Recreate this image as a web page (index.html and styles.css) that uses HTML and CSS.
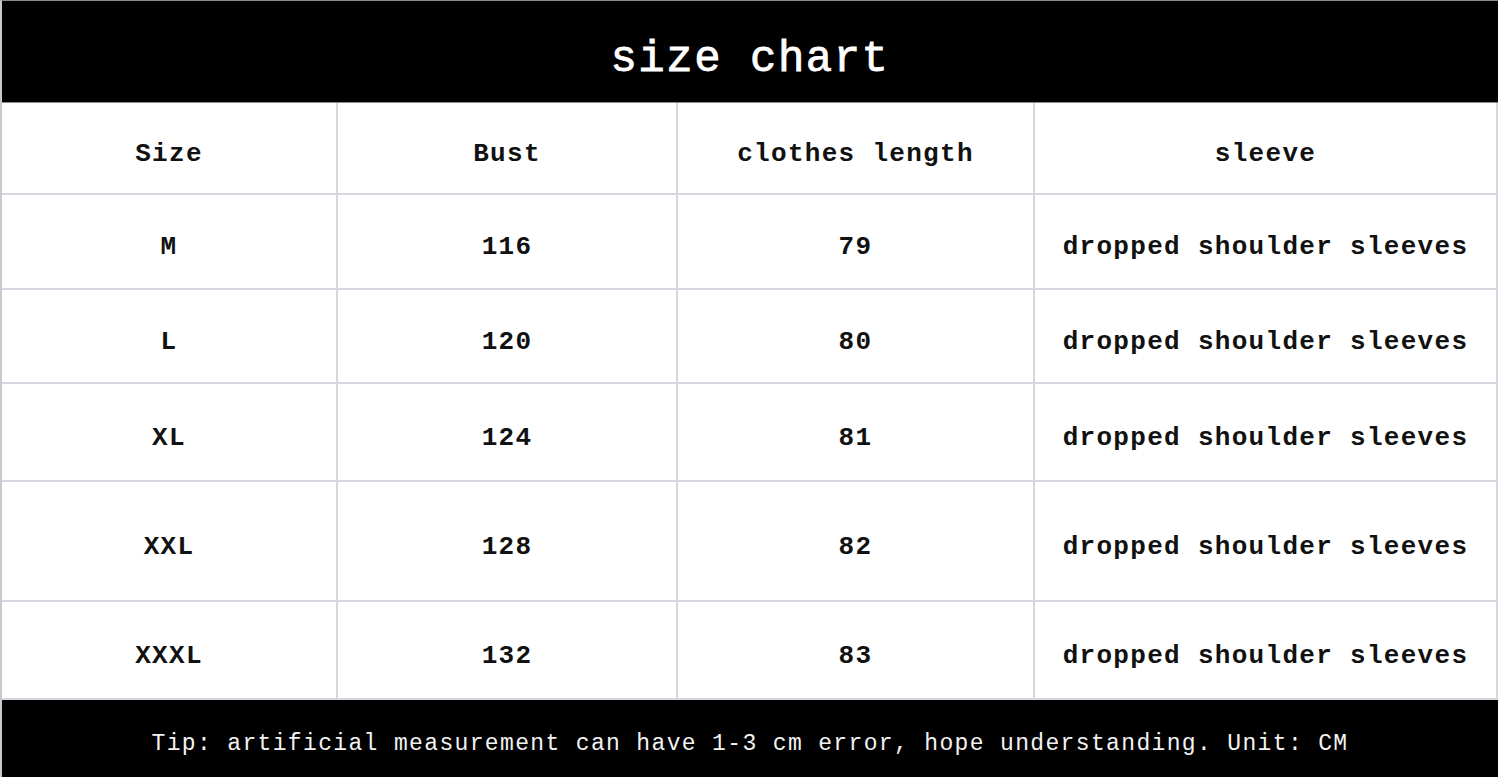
FILE: index.html
```html
<!DOCTYPE html>
<html>
<head>
<meta charset="utf-8">
<link rel="stylesheet" href="styles.css">
</head>
<body>
<div class="chart">
  <div class="title">size chart</div>
  <div class="grid">
    <div class="cell r0">Size</div>
    <div class="cell r0">Bust</div>
    <div class="cell r0">clothes length</div>
    <div class="cell r0 last">sleeve</div>

    <div class="cell">M</div>
    <div class="cell">116</div>
    <div class="cell">79</div>
    <div class="cell last">dropped shoulder sleeves</div>

    <div class="cell">L</div>
    <div class="cell">120</div>
    <div class="cell">80</div>
    <div class="cell last">dropped shoulder sleeves</div>

    <div class="cell">XL</div>
    <div class="cell">124</div>
    <div class="cell">81</div>
    <div class="cell last">dropped shoulder sleeves</div>

    <div class="cell">XXL</div>
    <div class="cell">128</div>
    <div class="cell">82</div>
    <div class="cell last">dropped shoulder sleeves</div>

    <div class="cell">XXXL</div>
    <div class="cell">132</div>
    <div class="cell">83</div>
    <div class="cell last">dropped shoulder sleeves</div>
  </div>
  <div class="tip">Tip: artificial measurement can have 1-3 cm error, hope understanding. Unit: CM</div>
</div>
</body>
</html>
```

FILE: styles.css
```css
html, body {
  margin: 0;
  padding: 0;
  background: #ffffff;
}

body {
  width: 1500px;
  height: 781px;
  overflow: hidden;
  font-family: "Liberation Mono", "Courier New", monospace;
}

.chart {
  width: 1496px;
  border-left: 2px solid #c9c9cf;
  border-top: 1px solid #8a8a8a;
  display: flex;
  flex-direction: column;
}

.title {
  height: 102px;
  background: #000000;
  color: #ffffff;
  display: flex;
  align-items: center;
  justify-content: center;
  font-size: 44px;
  font-weight: normal;
  -webkit-text-stroke: 0.8px #ffffff;
  letter-spacing: 1.5px;
  padding-top: 14px;
  box-sizing: border-box;
  border-bottom: 1px solid #8a8a8a;
}

.grid {
  display: grid;
  grid-template-columns: 336px 340px 357px 463px;
  grid-template-rows: 92px 95px 94px 98px 120px 98px;
}

.cell {
  display: flex;
  align-items: center;
  justify-content: center;
  border-right: 2px solid #d6d6de;
  border-bottom: 2px solid #d6d6de;
  font-size: 26px;
  font-weight: bold;
  letter-spacing: 1.3px;
  color: #111111;
  padding-top: 11px;
  box-sizing: border-box;
  white-space: nowrap;
}

.cell.last {
  border-right: 2px solid #d6d6de;
}

.tip {
  height: 77px;
  background: #000000;
  color: #f2f2f2;
  display: flex;
  align-items: center;
  justify-content: center;
  font-size: 23px;
  letter-spacing: 1.35px;
  padding-top: 10px;
  box-sizing: border-box;
  white-space: nowrap;
}
```
